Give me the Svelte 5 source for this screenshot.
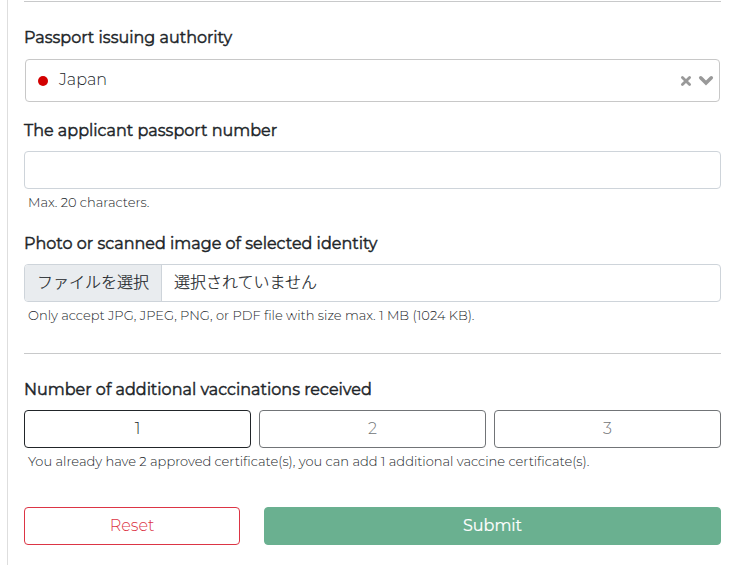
<script>
  const doses = [1, 2, 3]
  const maxDoses = 1

  let selected = 1
  let passportNumber = ''
  let country = 'Japan'

  function reset () {
    selected = 1
    passportNumber = ''
    country = 'Japan'
  }
</script>

<form on:submit|preventDefault on:reset|preventDefault={reset}>
  <hr>

  <div class="field authority">
    <div class="label">Passport issuing authority</div>
    <div class="select">
      {#if country}
        <span class="flag"></span>
        <span class="country">{country}</span>
      {/if}
      <button type="button" class="icon clear" aria-label="Clear" on:click={() => { country = '' }}>
        <svg width="12" height="12" viewBox="0 0 12 12">
          <path d="M2.4 2.4 9.6 9.6M9.6 2.4 2.4 9.6" />
        </svg>
      </button>
      <button type="button" class="icon arrow" aria-label="Open">
        <svg width="16" height="12" viewBox="0 0 16 12">
          <path d="M2.7 2.8 8 8.1 13.3 2.8" />
        </svg>
      </button>
    </div>
  </div>

  <div class="field number">
    <label class="label" for="passport">The applicant passport number</label>
    <input id="passport" class="control" maxlength="20" bind:value={passportNumber}>
    <div class="hint">Max. 20 characters.</div>
  </div>

  <div class="field photo">
    <div class="label">Photo or scanned image of selected identity</div>
    <div class="control file">
      <button type="button" class="choose">ファイルを選択</button>
      <span class="filename">選択されていません</span>
    </div>
    <div class="hint">Only accept JPG, JPEG, PNG, or PDF file with size max. 1 MB (1024 KB).</div>
  </div>

  <hr>

  <div class="field vaccinations">
    <div class="label">Number of additional vaccinations received</div>
    <div class="doses">
      {#each doses as dose}
        <button type="button" class="btn" disabled={dose > maxDoses} aria-pressed={selected === dose} on:click={() => { selected = dose }}>{dose}</button>
      {/each}
    </div>
    <div class="hint">You already have 2 approved certificate(s), you can add 1 additional vaccine certificate(s).</div>
  </div>

  <div class="actions">
    <button type="reset" class="btn reset">Reset</button>
    <button type="submit" class="btn submit">Submit</button>
  </div>
</form>

<style>
  :global(body) {
    background: #fff;
    overflow: hidden;
  }

  form {
    box-sizing: border-box;
    width: 723px;
    height: 565px;
    margin-left: 7px;
    padding: 1px 9px 0 16px;
    border-left: 1px solid #dedede;
    font-family: Montserrat, "Noto Sans CJK JP", sans-serif;
    font-size: 16px;
    line-height: 24px;
    color: #212529;
  }

  hr {
    height: 1px;
    margin: 0;
    border: none;
    background: #c8c9ca;
  }

  button, input {
    box-sizing: border-box;
    margin: 0;
    font: inherit;
    color: inherit;
  }

  .label {
    display: block;
    height: 24px;
    margin-bottom: 8px;
    font-weight: 400;
    -webkit-text-stroke: 0.45px #212529;
    white-space: nowrap;
  }

  .authority {
    padding-top: 24px;
  }

  .number {
    padding-top: 17px;
  }

  .photo {
    padding-top: 21px;
    padding-bottom: 29px;
  }

  .vaccinations {
    padding-top: 24px;
  }

  .select {
    box-sizing: border-box;
    display: flex;
    align-items: center;
    height: 43px;
    margin: 9px 1px 0;
    padding: 0 5px 0 12px;
    border: 1px solid #c8c8c8;
    border-radius: 4px;
  }

  .flag {
    width: 10px;
    height: 10px;
    margin-right: 11px;
    border-radius: 50%;
    background: #d30000;
  }

  .country {
    padding-bottom: 1px;
    font-weight: 300;
  }

  .icon {
    display: flex;
    padding: 0;
    border: none;
    background: none;
  }

  .icon.clear {
    margin-left: auto;
    margin-right: 6px;
  }

  .icon path {
    fill: none;
    stroke: #999;
    stroke-width: 2.8;
    stroke-linecap: round;
  }

  .icon.arrow path {
    stroke-width: 3.5;
  }

  .control {
    box-sizing: border-box;
    display: flex;
    width: 100%;
    height: 38px;
    border: 1px solid #ced4da;
    border-radius: 4px;
    padding: 0 12px;
    background: #fff;
    outline: none;
  }

  .file {
    padding: 0;
    overflow: hidden;
    font-family: "Noto Sans CJK JP", sans-serif;
    font-weight: 300;
    -webkit-text-stroke: 0.2px #212529;
  }

  .choose {
    width: 137px;
    padding: 0 0 4px;
    border: none;
    border-right: 1px solid #ced4da;
    background: #e9ecef;
    white-space: nowrap;
  }

  .filename {
    padding: 4px 12px;
  }

  .hint {
    height: 18px;
    padding: 4px 4px 0;
    font-size: 13px;
    font-weight: 300;
    line-height: 18px;
    white-space: nowrap;
  }

  .doses {
    display: grid;
    grid-template-columns: repeat(3, 1fr);
    gap: 8px;
  }

  .btn {
    height: 38px;
    padding: 0;
    border: 1px solid #212529;
    border-radius: 4px;
    background: transparent;
    font-weight: 300;
  }

  .btn:disabled {
    border-color: #717477;
    color: #717477;
  }

  .actions {
    display: grid;
    grid-template-columns: 216px 1fr;
    gap: 24px;
    padding-top: 37px;
  }

  .reset {
    border-color: #dc3545;
    color: #dc3545;
  }

  .submit {
    border-color: #6ab090;
    background: #6ab090;
    color: #fff;
    font-weight: 400;
    -webkit-text-stroke: 0.2px #fff;
  }
</style>
